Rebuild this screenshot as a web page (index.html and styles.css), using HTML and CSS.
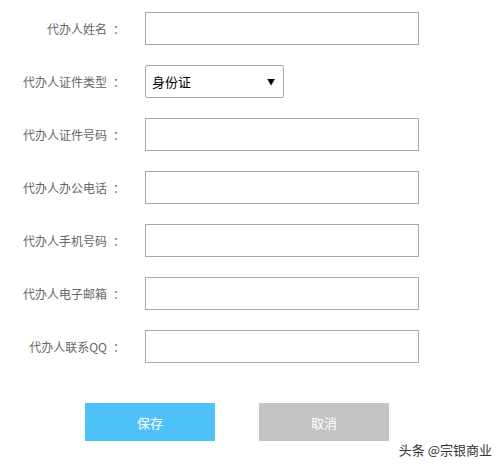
FILE: index.html
```html
<!DOCTYPE html>
<html lang="zh">
<head>
<meta charset="utf-8">
<link rel="stylesheet" href="styles.css">
</head>
<body>
<div class="page">
  <form class="form">
    <div class="row"><label class="label">代办人姓名<span class="colon">：</span></label><input class="field" type="text"></div>
    <div class="row"><label class="label">代办人证件类型<span class="colon">：</span></label>
      <div class="select"><span class="select-text">身份证</span><span class="caret">▼</span></div>
    </div>
    <div class="row"><label class="label">代办人证件号码<span class="colon">：</span></label><input class="field" type="text"></div>
    <div class="row"><label class="label">代办人办公电话<span class="colon">：</span></label><input class="field" type="text"></div>
    <div class="row"><label class="label">代办人手机号码<span class="colon">：</span></label><input class="field" type="text"></div>
    <div class="row"><label class="label">代办人电子邮箱<span class="colon">：</span></label><input class="field" type="text"></div>
    <div class="row"><label class="label">代办人联系QQ<span class="colon">：</span></label><input class="field" type="text"></div>
    <div class="actions">
      <button type="button" class="btn btn-save">保存</button>
      <button type="button" class="btn btn-cancel">取消</button>
    </div>
  </form>
  <div class="watermark">头条 @宗银商业</div>
</div>
</body>
</html>
```

FILE: styles.css
```css
html, body {
  margin: 0;
  padding: 0;
  background: #fff;
}
.page {
  position: relative;
  width: 500px;
  height: 469px;
  font-family: "Microsoft YaHei", "Noto Sans CJK SC", sans-serif;
}
.form {
  display: flex;
  flex-direction: column;
  gap: 20px;
  padding-top: 12px;
}
.row {
  display: flex;
  align-items: center;
  height: 33px;
}
.label {
  width: 125px;
  box-sizing: border-box;
  text-align: right;
  font-size: 12px;
  color: #666;
  white-space: nowrap;
}
.colon {
  display: inline-block;
  padding-left: 6px;
}
.field {
  margin: 0 0 0 20px;
  width: 274px;
  height: 33px;
  box-sizing: border-box;
  border: 1px solid #a9a9a9;
  padding: 0 4px;
  background: #fff;
  outline: none;
}
.select {
  margin-left: 20px;
  width: 139px;
  height: 33px;
  box-sizing: border-box;
  border: 1px solid #a9a9a9;
  border-radius: 2px;
  display: flex;
  align-items: center;
  justify-content: space-between;
  padding: 0 8px 0 6px;
  font-size: 13px;
  color: #000;
}
.caret {
  font-size: 8px;
  color: #000;
}
.actions {
  display: flex;
  gap: 44px;
  padding-left: 85px;
  margin-top: 20px;
}
.btn {
  width: 130px;
  height: 38px;
  border: none;
  color: #fff;
  font-size: 13px;
  font-family: inherit;
  padding: 0;
}
.btn-save { background: #4fc1f9; }
.btn-cancel { background: #c4c4c4; }
.watermark {
  position: absolute;
  right: 8px;
  bottom: 10px;
  font-size: 13px;
  color: #333;
}
```
